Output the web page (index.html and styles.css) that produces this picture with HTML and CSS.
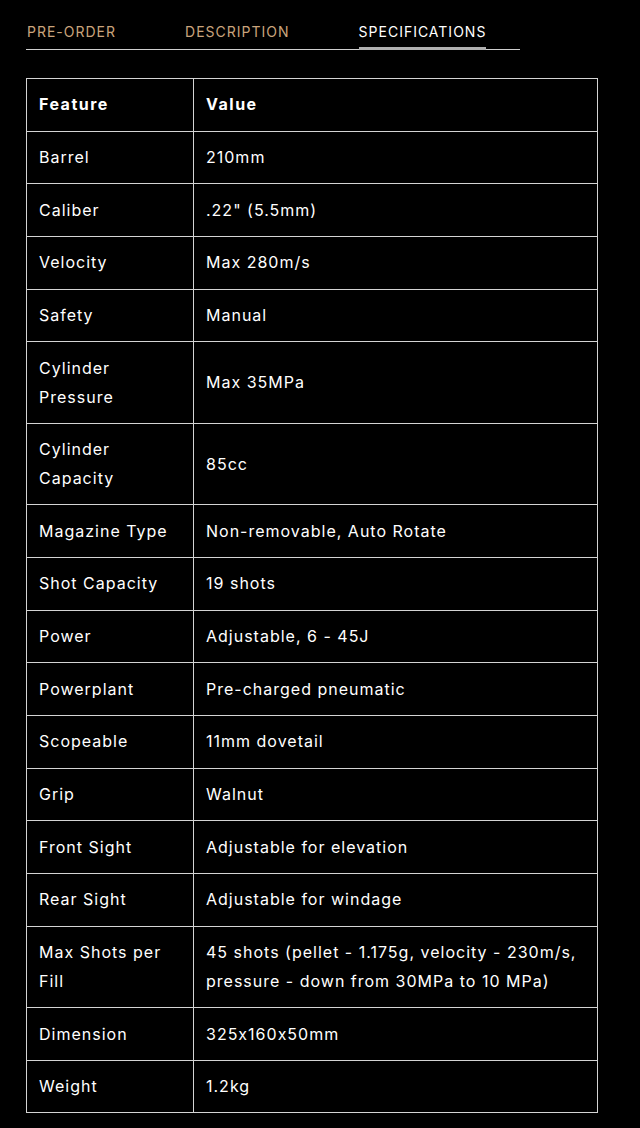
FILE: index.html
```html
<!DOCTYPE html>
<html lang="en">
<head>
<meta charset="utf-8">
<title>Specifications</title>
<link rel="stylesheet" href="styles.css">
</head>
<body>
<div class="page">
  <nav class="tabs">
    <a class="tab">PRE-ORDER</a>
    <a class="tab">DESCRIPTION</a>
    <a class="tab active">SPECIFICATIONS</a>
  </nav>
  <table class="specs">
    <colgroup><col class="c1"><col class="c2"></colgroup>
    <thead>
      <tr><th>Feature</th><th>Value</th></tr>
    </thead>
    <tbody>
      <tr><td>Barrel</td><td>210mm</td></tr>
      <tr><td>Caliber</td><td>.22" (5.5mm)</td></tr>
      <tr><td>Velocity</td><td>Max 280m/s</td></tr>
      <tr><td>Safety</td><td>Manual</td></tr>
      <tr><td>Cylinder Pressure</td><td>Max 35MPa</td></tr>
      <tr><td>Cylinder Capacity</td><td>85cc</td></tr>
      <tr><td>Magazine Type</td><td>Non-removable, Auto Rotate</td></tr>
      <tr><td>Shot Capacity</td><td>19 shots</td></tr>
      <tr><td>Power</td><td>Adjustable, 6 - 45J</td></tr>
      <tr><td>Powerplant</td><td>Pre-charged pneumatic</td></tr>
      <tr><td>Scopeable</td><td>11mm dovetail</td></tr>
      <tr><td>Grip</td><td>Walnut</td></tr>
      <tr><td>Front Sight</td><td>Adjustable for elevation</td></tr>
      <tr><td>Rear Sight</td><td>Adjustable for windage</td></tr>
      <tr><td>Max Shots per Fill</td><td>45 shots (pellet - 1.175g, velocity - 230m/s, pressure - down from 30MPa to 10 MPa)</td></tr>
      <tr><td>Dimension</td><td>325x160x50mm</td></tr>
      <tr><td>Weight</td><td>1.2kg</td></tr>
    </tbody>
  </table>
</div>
</body>
</html>
```

FILE: styles.css
```css
html, body {
  margin: 0;
  padding: 0;
  background: #000;
}
body {
  font-family: Inter, "Open Sans", sans-serif;
  font-feature-settings: "calt" 0;
  color: #fff;
}
.page {
  padding: 20px 42px 0 26px;
}
.tabs {
  display: flex;
  gap: 69px;
  width: 494px;
  border-bottom: 1px solid #cfcfcf;
  padding-left: 1px;
  box-sizing: border-box;
}
.tab {
  font-size: 14px;
  line-height: 24px;
  color: #caa47c;
  padding-bottom: 5px;
  letter-spacing: 1px;
  font-weight: 400;
}
.tab.active {
  color: #fff;
  box-shadow: inset 0 -3px 0 #b0b0b0;
  padding-bottom: 6px;
  margin-bottom: -1px;
}
.specs {
  margin-top: 28px;
  width: 572px;
  border-collapse: collapse;
  font-size: 16px;
  line-height: 28.8px;
  letter-spacing: 1px;
}
.c1 { width: 167px; }
.specs th, .specs td {
  border: 1px solid #d4d4d4;
  padding: 11.45px 12px;
  text-align: left;
  vertical-align: middle;
}
.specs th {
  font-weight: 700;
  letter-spacing: 1.5px;
}
.specs td {
  font-weight: 400;
}
```
